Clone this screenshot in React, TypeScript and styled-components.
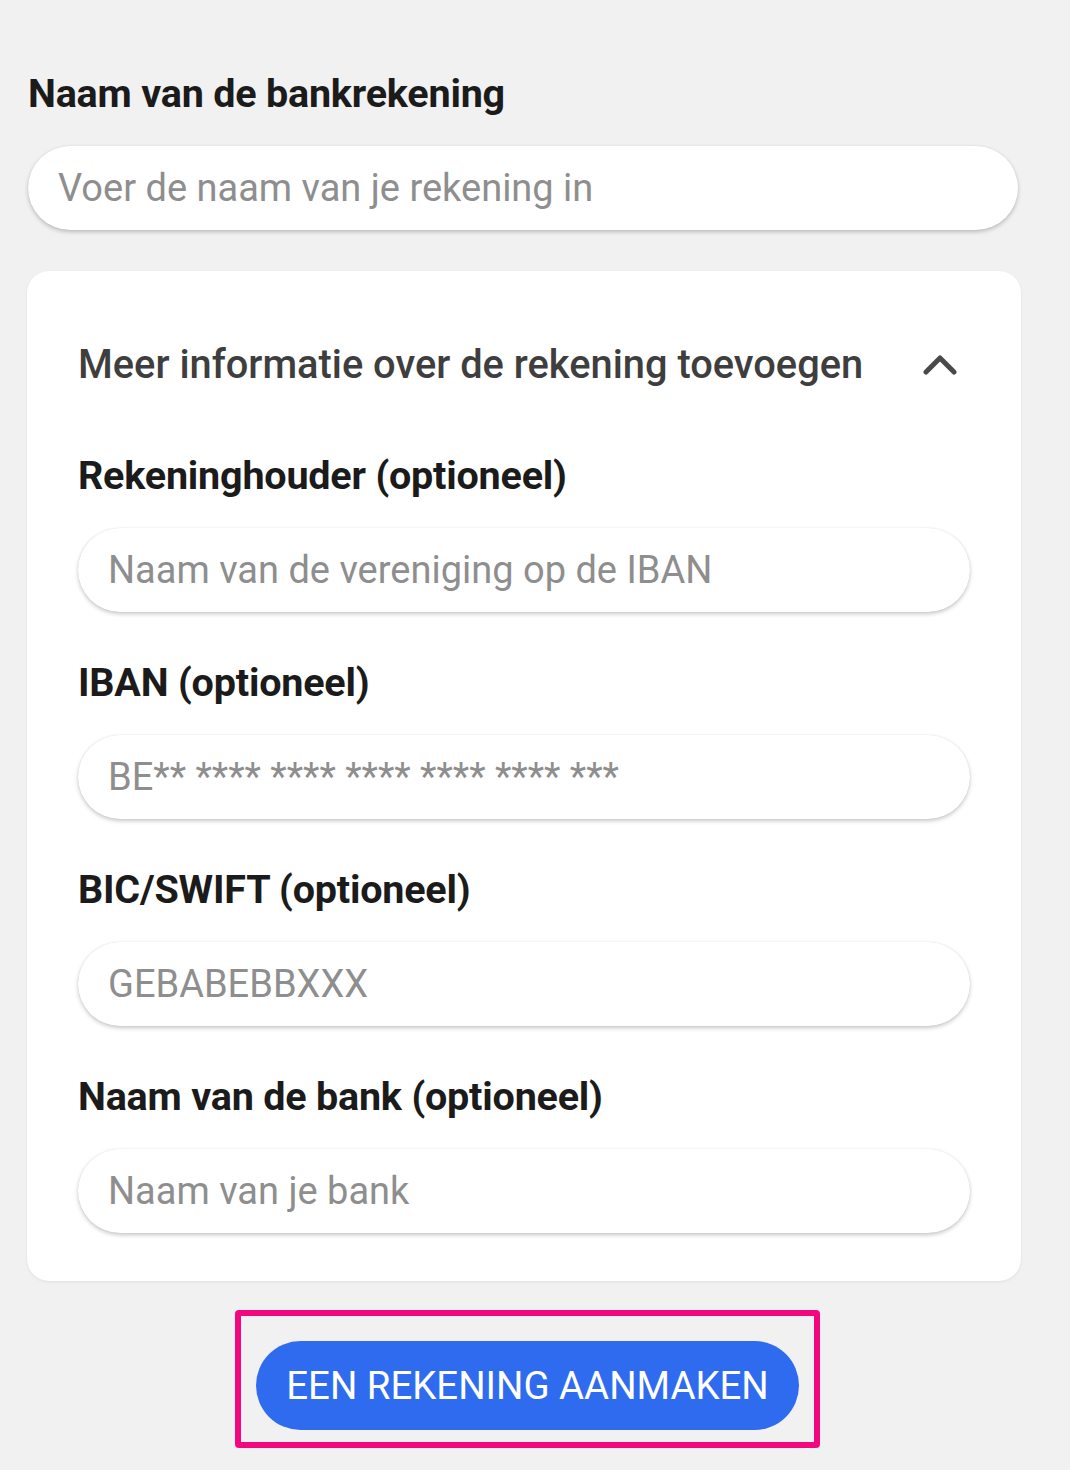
import React from "react";
import styled, { createGlobalStyle } from "styled-components";

const GlobalStyle = createGlobalStyle`
  body {
    margin: 0;
    background: #f1f1f1;
    font-family: Roboto, "Liberation Sans", sans-serif;
  }
`;

const Page = styled.div`
  display: flex;
  flex-direction: column;
  width: 994px;
  padding: 72px 0 0 27px;
`;

const Label = styled.label`
  display: block;
  font-size: 39.5px;
  line-height: 44px;
  font-weight: 700;
  letter-spacing: -0.2px;
  color: #1b1b1b;
`;

const TextInput = styled.input`
  box-sizing: border-box;
  width: 100%;
  height: 84px;
  margin-top: 30px;
  padding: 0 30px;
  border: none;
  border-radius: 42px;
  background: #fff;
  box-shadow: 0 2px 4px rgba(0, 0, 0, 0.22), 0 0 1px rgba(0, 0, 0, 0.12);
  font-family: Roboto, "Liberation Sans", sans-serif;
  font-size: 38px;
  color: #333;
  outline: none;

  &::placeholder {
    color: #8e8e8e;
  }
`;

const TopField = styled.div`
  display: flex;
  flex-direction: column;
  padding: 0 3px 0 1px;
`;

const Card = styled.div`
  margin-top: 41px;
  background: #fff;
  border-radius: 22px;
  box-shadow: 0 1px 3px rgba(0, 0, 0, 0.08);
  padding: 51px 51px 48px;
  display: flex;
  flex-direction: column;
`;

const SectionHeader = styled.div`
  display: flex;
  align-items: center;
  justify-content: space-between;
  height: 84px;
  padding-right: 13px;
  margin-bottom: 48px;
  font-size: 39.8px;
  font-weight: 500;
  color: #3e3e3e;
`;

const FieldList = styled.div`
  display: flex;
  flex-direction: column;
  gap: 49px;
`;

const Field = styled.div`
  display: flex;
  flex-direction: column;
`;

const ButtonRow = styled.div`
  display: flex;
  justify-content: center;
  margin-top: 29px;
  padding-left: 7px;
`;

const Highlight = styled.div`
  border: 6px solid #f2077f;
  border-radius: 4px;
  padding: 25px 15px 12px;
`;

const PrimaryButton = styled.button`
  height: 89px;
  padding: 0 30px;
  border: none;
  border-radius: 45px;
  background: #2f6bef;
  color: #fff;
  font-family: Roboto, "Liberation Sans", sans-serif;
  font-size: 38.4px;
  text-transform: uppercase;
  cursor: pointer;
  white-space: nowrap;
`;

const ChevronUp = () => (
  <svg width="34" height="22" viewBox="0 0 34 22" fill="none">
    <path
      d="M3 19 L17 5 L31 19"
      stroke="#4a4a4a"
      strokeWidth="5"
      strokeLinecap="round"
      strokeLinejoin="round"
    />
  </svg>
);

const fields = [
  { label: "Rekeninghouder (optioneel)", placeholder: "Naam van de vereniging op de IBAN" },
  { label: "IBAN (optioneel)", placeholder: "BE** **** **** **** **** **** ***" },
  { label: "BIC/SWIFT (optioneel)", placeholder: "GEBABEBBXXX" },
  { label: "Naam van de bank (optioneel)", placeholder: "Naam van je bank" },
];

const App: React.FC = () => {
  return (
    <>
      <GlobalStyle />
      <Page>
        <TopField>
          <Label>Naam van de bankrekening</Label>
          <TextInput type="text" placeholder="Voer de naam van je rekening in" />
        </TopField>

        <Card>
          <SectionHeader>
            <span>Meer informatie over de rekening toevoegen</span>
            <ChevronUp />
          </SectionHeader>
          <FieldList>
            {fields.map(({ label, placeholder }) => (
              <Field key={label}>
                <Label>{label}</Label>
                <TextInput type="text" placeholder={placeholder} />
              </Field>
            ))}
          </FieldList>
        </Card>

        <ButtonRow>
          <Highlight>
            <PrimaryButton>Een rekening aanmaken</PrimaryButton>
          </Highlight>
        </ButtonRow>
      </Page>
    </>
  );
};

export default App;
